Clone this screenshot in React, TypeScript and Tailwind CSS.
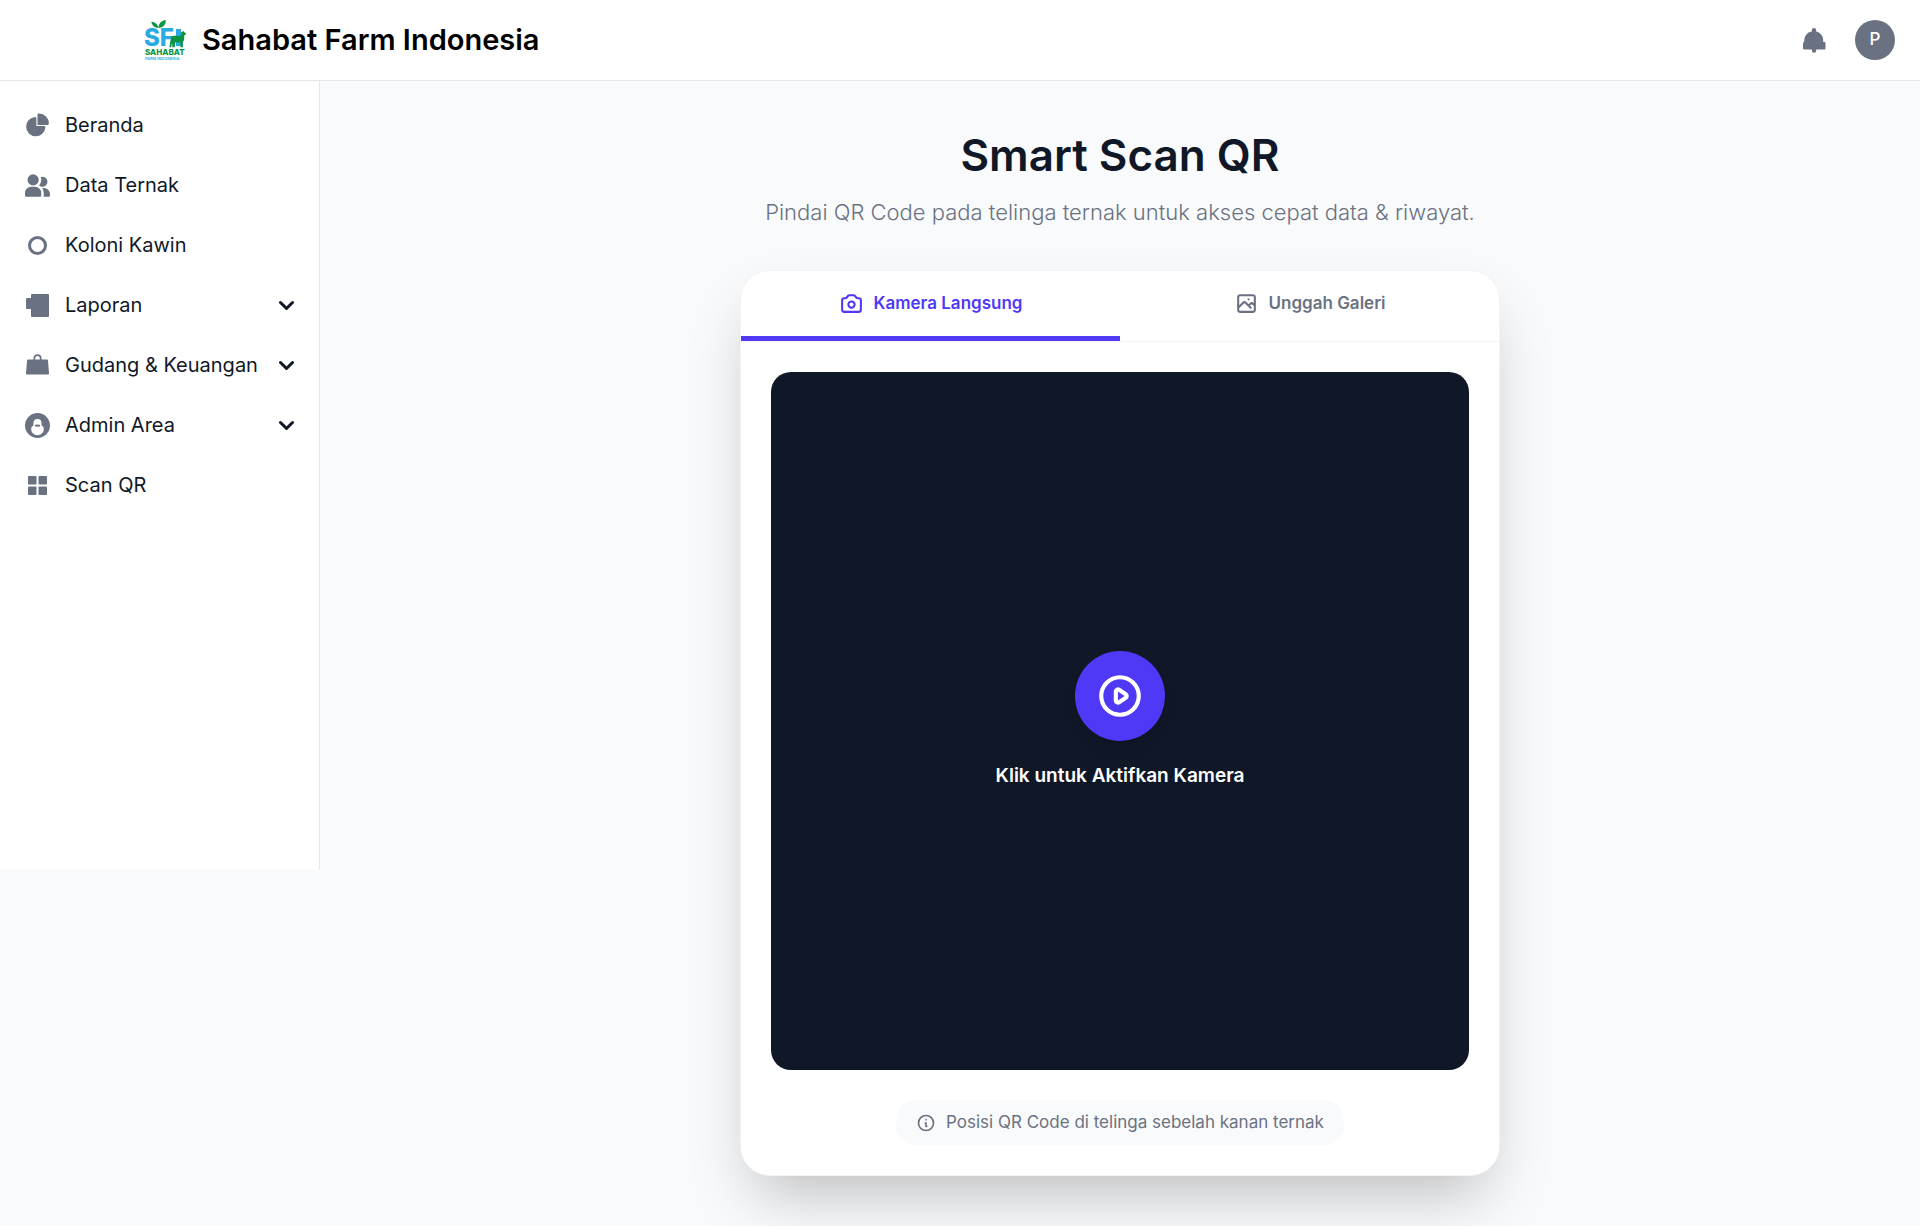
import { useState, type ReactNode } from 'react'

type MenuItem = {
  label: string
  icon: ReactNode
  hasChildren?: boolean
}

const ICON_CLASS = 'h-[25px] w-[25px] shrink-0 text-gray-500'

const MENU: MenuItem[] = [
  {
    label: 'Beranda',
    icon: (
      <svg className={ICON_CLASS} viewBox="0 0 22 21" fill="currentColor" aria-hidden="true">
        <path d="M16.975 11H10V4.025a1 1 0 0 0-1.066-.998 8.5 8.5 0 1 0 9.039 9.039.999.999 0 0 0-1-1.066h.002Z" />
        <path d="M12.5 0c-.157 0-.311.01-.565.027A1 1 0 0 0 11 1.02V10h8.975a1 1 0 0 0 1-.935c.013-.188.028-.374.028-.565A8.51 8.51 0 0 0 12.5 0Z" />
      </svg>
    ),
  },
  {
    label: 'Data Ternak',
    icon: (
      <svg className={ICON_CLASS} viewBox="0 0 20 18" fill="currentColor" aria-hidden="true">
        <path d="M14 2a3.963 3.963 0 0 0-1.4.267 6.439 6.439 0 0 1-1.331 6.638A4 4 0 1 0 14 2Zm1 9h-1.264A6.957 6.957 0 0 1 15 15v2a2.97 2.97 0 0 1-.184 1H19a1 1 0 0 0 1-1v-1a5.006 5.006 0 0 0-5-5ZM6.5 9a4.5 4.5 0 1 0 0-9 4.5 4.5 0 0 0 0 9ZM8 10H5a5.006 5.006 0 0 0-5 5v2a1 1 0 0 0 1 1h11a1 1 0 0 0 1-1v-2a5.006 5.006 0 0 0-5-5Z" />
      </svg>
    ),
  },
  {
    label: 'Koloni Kawin',
    icon: (
      <svg className={ICON_CLASS} viewBox="0 0 25 25" fill="none" stroke="currentColor" strokeWidth="3" aria-hidden="true">
        <circle cx="12.5" cy="12.5" r="8" />
      </svg>
    ),
  },
  {
    label: 'Laporan',
    hasChildren: true,
    icon: (
      <svg className={ICON_CLASS} viewBox="0 0 25 25" fill="currentColor" aria-hidden="true">
        <path d="M7 1h16a1 1 0 0 1 1 1v21a1 1 0 0 1-1 1H7a1 1 0 0 1-1-1v-7H2a1 1 0 0 1-1-1V6a1 1 0 0 1 1-1h4V2a1 1 0 0 1 1-1Z" />
      </svg>
    ),
  },
  {
    label: 'Gudang & Keuangan',
    hasChildren: true,
    icon: (
      <svg className={ICON_CLASS} viewBox="0 0 25 25" fill="currentColor" aria-hidden="true">
        <path d="M3.3 6.5h18.4c.7 0 1.2.4 1.3 1L24 20.200c.1.9-.4 1.400-1.200 1.400H2.200c-.8 0-1.300-.5-1.200-1.400L2 7.500c.1-.6.600-1 1.300-1Z" />
        <path d="M8.500 11V5.200a4 4 0 0 1 8 0V11Z" />
        <path d="M10.200 6.500V5.300a2.300 2.300 0 0 1 4.600 0v1.200Z" fill="white" />
      </svg>
    ),
  },
  {
    label: 'Admin Area',
    hasChildren: true,
    icon: (
      <svg className={ICON_CLASS} viewBox="0 0 25 25" fill="currentColor" aria-hidden="true">
        <circle cx="12.5" cy="12.5" r="12.5" />
        <path
          d="M12.5 6a4 4 0 0 0-4 4v2.600C7 13.300 6.200 14.300 6.200 16c0 4 3.200 6.200 6.300 6.200s6.300-2.200 6.300-6.200c0-1.700-.8-2.700-2.300-3.400V10a4 4 0 0 0-4-4Z"
          fill="white"
        />
        <ellipse cx="12.5" cy="12.600" rx="2.800" ry="1.200" />
      </svg>
    ),
  },
  {
    label: 'Scan QR',
    icon: (
      <svg className={ICON_CLASS} viewBox="0 0 25 25" fill="currentColor" aria-hidden="true">
        <rect x="3" y="3" width="8.5" height="8.5" rx="1" />
        <rect x="13.5" y="3" width="8.5" height="8.5" rx="1" />
        <rect x="3" y="13.5" width="8.5" height="8.5" rx="1" />
        <rect x="13.5" y="13.5" width="8.5" height="8.5" rx="1" />
      </svg>
    ),
  },
]

const PATHS = {
  camera:
    'M3 9a2 2 0 012-2h.93a2 2 0 001.664-.89l.812-1.22A2 2 0 0110.07 4h3.86a2 2 0 011.664.89l.812 1.22A2 2 0 0018.07 7H19a2 2 0 012 2v9a2 2 0 01-2 2H5a2 2 0 01-2-2V9z M15 13a3 3 0 11-6 0 3 3 0 016 0z',
  image:
    'M4 16l4.586-4.586a2 2 0 012.828 0L16 16m-2-2l1.586-1.586a2 2 0 012.828 0L20 14m-6-6h.01M6 20h12a2 2 0 002-2V6a2 2 0 00-2-2H6a2 2 0 00-2 2v12a2 2 0 002 2z',
  play: 'M14.752 11.168l-3.197-2.132A1 1 0 0010 9.87v4.263a1 1 0 001.555.832l3.197-2.132a1 1 0 000-1.664z M21 12a9 9 0 11-18 0 9 9 0 0118 0z',
  info: 'M13 16h-1v-4h-1m1-4h.01M21 12a9 9 0 11-18 0 9 9 0 0118 0z',
}

function OutlineIcon({ name, className }: { name: keyof typeof PATHS; className: string }) {
  return (
    <svg
      className={className}
      viewBox="0 0 24 24"
      fill="none"
      stroke="currentColor"
      strokeWidth="2"
      strokeLinecap="round"
      strokeLinejoin="round"
      aria-hidden="true"
    >
      <path d={PATHS[name]} />
    </svg>
  )
}

function Logo() {
  return (
    <svg
      className="h-10 w-[42px] shrink-0 overflow-visible"
      viewBox="0 0 42 40"
      role="img"
      aria-label="Sahabat Farm Indonesia"
    >
      <path d="M13.5 8C9.500 8 7 5.500 6.300 1.800c3.600.2 6.400 2.400 7.200 6.200Z" fill="#0b9444" />
      <path d="M13.5 8c0-4.500 2.600-7.300 7.200-8 .3 4.600-2.500 7.800-7.200 8Z" fill="#0b9444" />
      <text x="-1" y="26" fontFamily="Inter, sans-serif" fontSize="24" fontWeight="800" fill="#29abe2">
        SF
      </text>
      <rect x="31" y="9" width="5" height="17" fill="#29abe2" />
      <path
        d="M26.500 16.500c3-1.200 6-.2 9-.8l1-2.700-1-1 2.200-.3 1-.7.6 1.200 2 1.300-.8 1.300-1.200.3-.2 5.200-1.200 1.500v5.400h-2.400v-4.800h-5.200l-.7 4.800h-2.400v-4.500l-1.100 4.500h-1.800l1-6Z"
        fill="#0b9444"
      />
      <text x="0" y="35" fontFamily="Inter, sans-serif" fontSize="8" fontWeight="800" fill="#0b9444">
        SAHABAT
      </text>
      <text x="0" y="40" fontFamily="Inter, sans-serif" fontSize="4" fontWeight="600" fill="#29abe2">
        FARM INDONESIA
      </text>
    </svg>
  )
}

function Header() {
  return (
    <header className="flex items-center justify-between border-b border-gray-200 bg-white py-5 pr-[25px] pl-[145px]">
      <a href="#" className="flex items-center gap-[15px]">
        <Logo />
        <span className="text-[29px] leading-10 font-semibold text-black">Sahabat Farm Indonesia</span>
      </a>
      <div className="flex items-center gap-7">
        <button type="button" aria-label="Notifikasi" className="text-gray-500">
          <svg className="h-[25px] w-[25px]" viewBox="0 0 25 25" fill="currentColor" aria-hidden="true">
            <path d="M12 0a2.200 2.200 0 0 1 2.200 2.200v1.400a8.500 8.500 0 0 1 7 8.200V14h1.300a1 1 0 0 1 1 1v5.500a1 1 0 0 1-1 1h-8.300v1a2.200 2.200 0 0 1-4.400 0v-1H2a1 1 0 0 1-1-1V15.500c0-1 1.300-1.500 1.300-2.700v-1.200a8.500 8.500 0 0 1 7.500-8V2.200A2.200 2.200 0 0 1 12 0Z" />
          </svg>
        </button>
        <button
          type="button"
          className="flex h-10 w-10 items-center justify-center rounded-full bg-gray-500 text-[17px] font-medium text-white"
        >
          P
        </button>
      </div>
    </header>
  )
}

function Sidebar() {
  return (
    <aside className="min-h-[788px] w-80 shrink-0 self-start border-r border-gray-200 bg-white px-[15px] pt-[19px]">
      <ul className="space-y-[10px]">
        {MENU.map((item) => (
          <li key={item.label}>
            <button type="button" className="flex w-full items-center gap-[15px] rounded-lg p-[10px] text-left">
              {item.icon}
              <span className="flex-1 text-[20px] leading-[30px] whitespace-nowrap text-gray-900">{item.label}</span>
              {item.hasChildren && (
                <svg className="h-[15px] w-[15px] text-gray-900" viewBox="0 0 10 6" fill="none" aria-hidden="true">
                  <path d="m1 1 4 4 4-4" stroke="currentColor" strokeWidth="2" strokeLinecap="round" strokeLinejoin="round" />
                </svg>
              )}
            </button>
          </li>
        ))}
      </ul>
    </aside>
  )
}

type Tab = 'camera' | 'gallery'

function ScanCard() {
  const [tab, setTab] = useState<Tab>('camera')

  const tabClass = (active: boolean) =>
    active
      ? 'flex flex-1 justify-center gap-[10px] border-b-5 border-indigo-600 py-5 text-indigo-600'
      : 'flex flex-1 justify-center gap-[10px] border-b-5 border-transparent py-5 text-gray-500'

  return (
    <section className="w-full max-w-[760px] overflow-hidden rounded-[30px] border border-gray-100 bg-white shadow-[0_31px_63px_-15px_rgb(0_0_0/0.25)]">
      <div role="tablist" className="flex border-b border-gray-100">
        <button
          type="button"
          role="tab"
          aria-selected={tab === 'camera'}
          onClick={() => setTab('camera')}
          className={tabClass(tab === 'camera')}
        >
          <OutlineIcon name="camera" className="h-[25px] w-[25px]" />
          <span className="text-[17px] leading-[25px] font-semibold">Kamera Langsung</span>
        </button>
        <button
          type="button"
          role="tab"
          aria-selected={tab === 'gallery'}
          onClick={() => setTab('gallery')}
          className={tabClass(tab === 'gallery')}
        >
          <OutlineIcon name="image" className="h-[25px] w-[25px]" />
          <span className="text-[17px] leading-[25px] font-semibold">Unggah Galeri</span>
        </button>
      </div>

      <div className="flex flex-col items-center gap-[30px] p-[30px]">
        <div className="flex aspect-square w-full flex-col items-center justify-center gap-5 rounded-[20px] bg-gray-900">
          <button
            type="button"
            aria-label="Aktifkan kamera"
            className="flex h-[90px] w-[90px] items-center justify-center rounded-full bg-indigo-600 text-white shadow-lg"
          >
            <OutlineIcon name="play" className="h-[50px] w-[50px]" />
          </button>
          <p className="text-[19px] leading-[30px] font-semibold text-white">Klik untuk Aktifkan Kamera</p>
        </div>

        <p className="flex items-center gap-[10px] rounded-[20px] bg-gray-50 px-5 py-[10px] text-[17px] leading-[25px] text-gray-500">
          <OutlineIcon name="info" className="h-5 w-5" />
          Posisi QR Code di telinga sebelah kanan ternak
        </p>
      </div>
    </section>
  )
}

export default function App() {
  return (
    <div className="min-h-screen bg-gray-50 font-['Inter',sans-serif]">
      <Header />
      <div className="flex">
        <Sidebar />
        <main className="flex flex-1 flex-col items-center px-10 py-[49px]">
          <h1 className="text-[44px] leading-[50px] font-semibold text-gray-900">Smart Scan QR</h1>
          <p className="mt-[15px] mb-10 text-[22px] leading-[35px] font-light text-gray-500">
            Pindai QR Code pada telinga ternak untuk akses cepat data &amp; riwayat.
          </p>
          <ScanCard />
        </main>
      </div>
    </div>
  )
}
